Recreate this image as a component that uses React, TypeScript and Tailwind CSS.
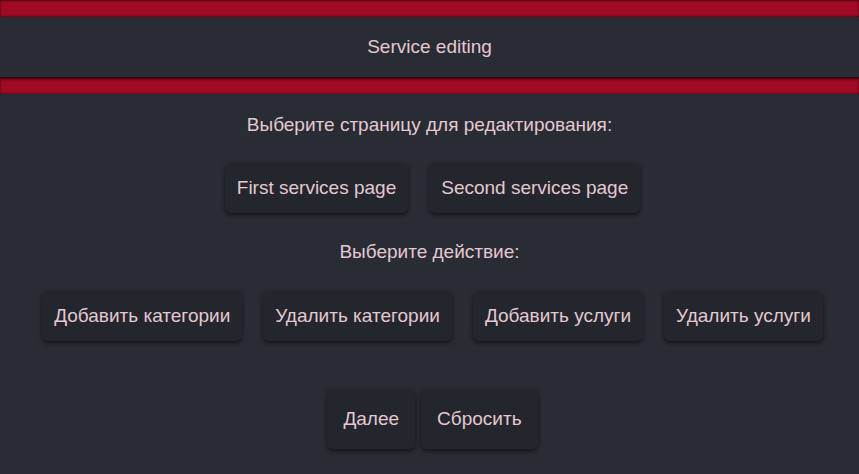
const pageButtons = ["First services page", "Second services page"];
const actions = ["Добавить категории", "Удалить категории", "Добавить услуги", "Удалить услуги"];

function Btn({ label, tall }: { label: string; tall?: boolean }) {
  return (
    <button
      className={`rounded-md bg-[#23262d] text-[19px] leading-[22px] text-[#e6c8d0] shadow-[0_2px_4px_rgba(0,0,0,0.55)] ${
        tall ? "h-[60px] px-4" : "h-[50px] px-3"
      }`}
    >
      {label}
    </button>
  );
}

function RedBar() {
  return (
    <div className="h-[17px] w-full bg-[#a10a23] shadow-[inset_0_1px_2px_rgba(0,0,0,0.5),inset_0_-1px_2px_rgba(0,0,0,0.3)]" />
  );
}

export default function App() {
  return (
    <div
      className="min-h-[474px] w-full bg-[#282c34] text-[#e6c8d0]"
      style={{ fontFamily: '"Liberation Sans", Arial, sans-serif' }}
    >
      <RedBar />
      <div className="relative flex h-[60px] items-center justify-center text-[19px] shadow-[0_2px_3px_rgba(0,0,0,0.6)]">
        Service editing
      </div>
      <RedBar />

      <div className="flex flex-col items-center">
        <p className="mt-[20px] text-[19px] leading-[22px]">Выберите страницу для редактирования:</p>
        <div className="mt-[27px] flex gap-[21px] pl-[6px]">
          {pageButtons.map((b) => (
            <Btn key={b} label={b} />
          ))}
        </div>

        <p className="mt-[28px] text-[19px] leading-[22px]">Выберите действие:</p>
        <div className="mt-[28px] flex gap-[21px] pl-[6px]">
          {actions.map((a) => (
            <Btn key={a} label={a} />
          ))}
        </div>

        <div className="mt-[48px] flex gap-[6px] pl-[6px]">
          <Btn label="Далее" tall />
          <Btn label="Сбросить" tall />
        </div>
      </div>
    </div>
  );
}
